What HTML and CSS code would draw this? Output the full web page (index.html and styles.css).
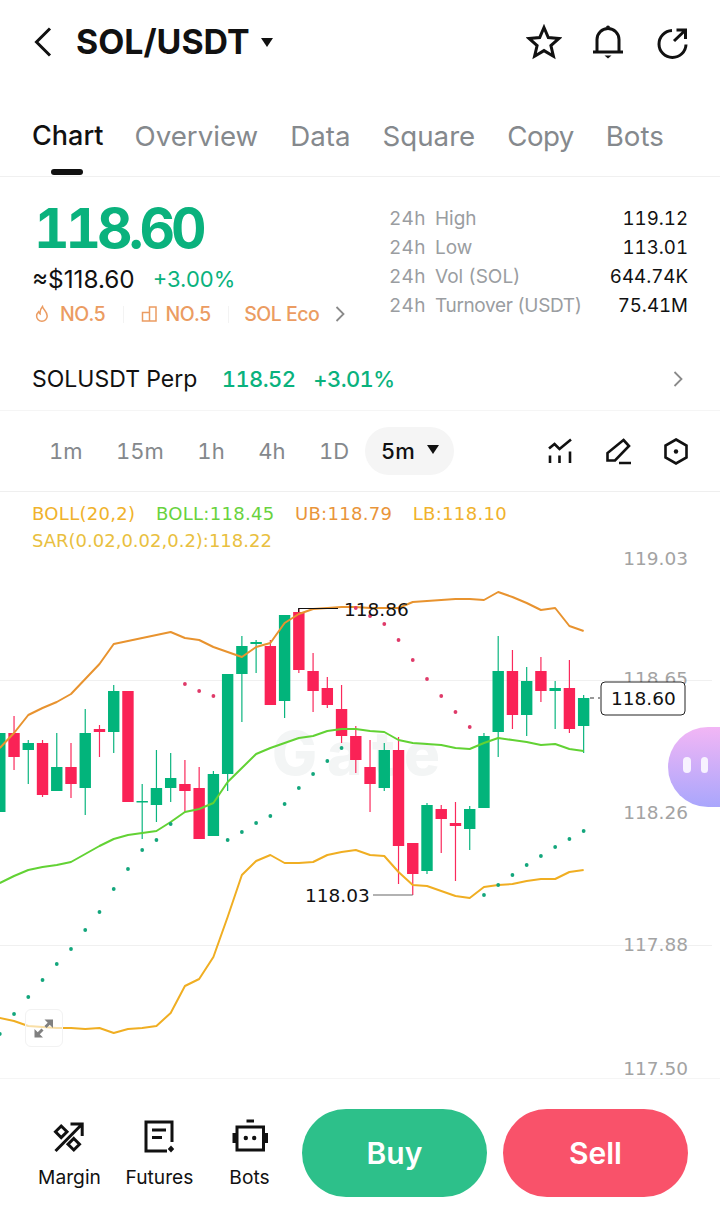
FILE: index.html
```html
<!DOCTYPE html>
<html lang="en">
<head>
<meta charset="utf-8">
<title>SOL/USDT</title>
<link rel="stylesheet" href="styles.css">
</head>
<body>
<div class="page">
  <header class="topbar">
    <div class="pair">
      <svg class="ic-back" viewBox="0 0 20 32"><path d="M17 2.500 3.500 16 17 29.500"/></svg>
      <h1 class="pair-name">SOL/USDT</h1>
      <span class="caret caret-lg"></span>
    </div>
    <div class="top-icons">
      <svg class="ic36" viewBox="0 0 36 36"><path d="M18 3.500l4.300 10 10.700 1-8.100 7.100 2.500 10.600L18 26.600l-9.400 5.600 2.500-10.600L3 14.500l10.700-1z"/></svg>
      <svg class="ic36" viewBox="0 0 36 36"><path d="M7 28V15.500a11 11 0 0 1 22 0V28M3 28h30"/><path class="solid" d="M16 3.500a2 2 0 0 1 4 0zM14.500 31.500h7l-3.500 3z"/></svg>
      <svg class="ic36" viewBox="0 0 36 36"><path d="M18 6.500a13.500 13.500 0 1 0 14 14M20 17 31 6.500M22.500 6H31.500V15"/></svg>
    </div>
  </header>

  <nav class="tabs">
    <a class="tab tab-active">Chart</a>
    <a class="tab">Overview</a>
    <a class="tab">Data</a>
    <a class="tab">Square</a>
    <a class="tab tab-tight">Copy</a>
    <a class="tab">Bots</a>
  </nav>

  <section class="ticker">
    <div class="ticker-main">
      <div class="price">118.60</div>
      <div class="price-sub"><span class="fiat">≈$118.60</span><span class="up">+3.00%</span></div>
      <div class="tags">
        <svg class="ic-tag" viewBox="0 0 16 18"><path d="M8.500 1.500c.5 3 4.700 5 4.700 9.500a5.300 5.300 0 0 1-10.600 0c0-2 1-3.300 2-4.300.3 1.200.8 1.800 1.500 2.200C5.800 6 6.800 3.500 8.500 1.500z"/></svg>
        <span class="tag-text tag-a">NO.5</span>
        <i class="tag-sep"></i>
        <svg class="ic-tag ic-build" viewBox="0 0 16 16"><path d="M8.500 1h6.500v14H8.500zM8.500 6.500H1.500V15h7"/></svg>
        <span class="tag-text tag-b">NO.5</span>
        <i class="tag-sep"></i>
        <span class="tag-text tag-c">SOL Eco</span>
        <svg class="ic-chev" viewBox="0 0 10 16"><path d="M1.500 1 8.500 8l-7 7"/></svg>
      </div>
    </div>
    <dl class="stats">
      <div class="stat"><dt><span class="h24">24h</span>High</dt><dd>119.12</dd></div>
      <div class="stat"><dt><span class="h24">24h</span>Low</dt><dd>113.01</dd></div>
      <div class="stat"><dt><span class="h24">24h</span>Vol (SOL)</dt><dd>644.74K</dd></div>
      <div class="stat"><dt><span class="h24">24h</span><span class="tight">Turnover (USDT)</span></dt><dd>75.41M</dd></div>
    </dl>
  </section>

  <section class="perp">
    <span class="perp-name">SOLUSDT Perp</span>
    <span class="perp-price">118.52</span>
    <span class="perp-pct">+3.01%</span>
    <svg class="ic-chev perp-chev" viewBox="0 0 10 16"><path d="M1.500 1 8.500 8l-7 7"/></svg>
  </section>

  <section class="toolbar">
    <div class="periods">
      <span class="period">1m</span>
      <span class="period">15m</span>
      <span class="period">1h</span>
      <span class="period">4h</span>
      <span class="period">1D</span>
      <span class="period period-active">5m<span class="caret"></span></span>
    </div>
    <div class="tools">
      <svg class="ic28" viewBox="0 0 28 28"><path d="M3 11.500 8.500 7l5 5L25 2.500M4 18.500V26M13.500 18.500V26M24 14.500V26"/></svg>
      <svg class="ic28" viewBox="0 0 28 28"><path d="M19.500 3 25 9 11 23.500H3.500V16zM15 26h12" /></svg>
      <svg class="ic28" viewBox="0 0 28 28"><path d="M14 2.500 24.500 8.500v12L14 26.500 3.500 20.500v-12z"/><circle class="solid" cx="14" cy="14.500" r="2.200"/></svg>
    </div>
  </section>

  <section class="chart">
    <div class="legend">
      <div class="legend-row">
        <span class="c-yellow">BOLL(20,2)</span>
        <span class="c-green">BOLL:118.45</span>
        <span class="c-orange">UB:118.79</span>
        <span class="c-yellow">LB:118.10</span>
      </div>
      <div class="legend-row legend-plain"><span class="c-sar">SAR(0.02,0.02,0.2):118.22</span></div>
    </div>
    <svg id="plot" class="plot" viewBox="0 492 720 586">
      <path class="grid" d="M0 680.500H712M0 945.500H712"/>
      <text class="wm" x="272" y="775" textLength="168" lengthAdjust="spacing">Gate</text>
      <g id="series"></g>
      <text class="axis" x="688" y="565">119.03</text>
      <text class="axis" x="688" y="685">118.65</text>
      <text class="axis" x="688" y="819">118.26</text>
      <text class="axis" x="688" y="951">117.88</text>
      <text class="axis" x="688" y="1075">117.50</text>
      <path class="lead" d="M298.700 612V608.500H338"/>
      <text class="mark" x="344" y="615.500">118.86</text>
      <path class="lead lead-low" d="M373 895H412.700"/>
      <text class="mark" x="305" y="901.500">118.03</text>
      <path class="dash" d="M590 698H600"/>
      <rect class="tag-box" x="601" y="682" width="84" height="33" rx="4"/>
      <text class="mark" x="611" y="705">118.60</text>
    </svg>
    <button class="expand" type="button" aria-label="Expand">
      <svg viewBox="0 0 35 35"><path class="arrow-fill" d="M8.500 26.500V18l8.500 8.500zM27 8.500V17L18.500 8.500z"/><path class="arrow-stem" d="M11.500 23.500 16.500 18.500M24 11.500 19.500 16"/></svg>
    </button>
    <div class="float-btn"><i></i><i></i></div>
  </section>

  <footer class="actions">
    <a class="action">
      <svg class="ic36" viewBox="0 0 36 36"><path d="M9.200 8 15 13.700 9.200 19.500 3.500 13.700zM21.800 20.500 27.500 26.300 21.800 32 16 26.300zM3.500 33 30.200 6M18.500 6H30.200V18"/></svg>
      <span>Margin</span>
    </a>
    <a class="action">
      <svg class="ic36" viewBox="0 0 36 36"><path d="M30 24V4H4V33H25M10 12H24M10 19.500H20"/><path class="solid" d="M29 27.500 32.200 31 29 34.500 25.800 31z"/></svg>
      <span>Futures</span>
    </a>
    <a class="action">
      <svg class="ic36" viewBox="0 0 36 36"><path d="M5 9H31.500V32H5zM2 15V25M34.500 15V25M14.500 3H22"/><circle class="solid" cx="13.800" cy="20" r="2.200"/><circle class="solid" cx="22.200" cy="20" r="2.200"/></svg>
      <span>Bots</span>
    </a>
    <a class="trade trade-buy">Buy</a>
    <a class="trade trade-sell">Sell</a>
  </footer>
</div>
<script src="chart.js"></script>
</body>
</html>
```
FILE: styles.css
```css
* { box-sizing: border-box; }
html, body { margin: 0; padding: 0; background: #fff; }
body { font-family: Inter, "Liberation Sans", sans-serif; color: #111; font-variant-numeric: tabular-nums; }
.page { width: 720px; height: 1228px; overflow: hidden; position: relative; }
svg path { fill: none; stroke: currentColor; }
svg .solid { fill: currentColor; stroke: none; }

.topbar { height: 84px; display: flex; align-items: center; justify-content: space-between; padding: 0 30px 0 33px; color: #111; }
.pair { display: flex; align-items: center; }
.ic-back { width: 20px; height: 32px; margin-right: 23px; }
.ic-back path { stroke-width: 3; }
.pair-name { margin: 0; font-size: 33.900px; font-weight: 700; line-height: 40px; }
.caret { display: inline-block; width: 0; height: 0; border-left: 6.500px solid transparent; border-right: 6.500px solid transparent; border-top: 9px solid #111; }
.caret-lg { margin-left: 11px; }
.top-icons { display: flex; gap: 28px; }
.ic36 { width: 36px; height: 36px; display: block; flex: none; }
.ic36 path { stroke-width: 3; }

.tabs { height: 93px; display: flex; gap: 32px; padding: 32px 0 0 32px; border-bottom: 1px solid #f0f0f0; }
.tab { font-size: 27.700px; line-height: 40px; color: #85898d; font-weight: 400; }
.tab-tight { letter-spacing: -0.6px; }
.tab-active { font-size: 27px; color: #111; font-weight: 500; position: relative; margin-right: -1px; }
.tab-active::after { content: ""; position: absolute; left: 19px; bottom: 1px; width: 32px; height: 6px; border-radius: 3px; background: #111; }

.ticker { height: 175px; display: flex; justify-content: space-between; padding: 26px 32px 0 32px; }
.ticker-main { width: 330px; }
.price { font-size: 55px; line-height: 50px; font-weight: 700; color: #0ab27d; letter-spacing: -4px; margin-left: 2px; }
.price-sub { display: flex; align-items: center; margin-top: 11px; font-size: 24px; line-height: 30px; }
.fiat { color: #111; margin-right: 18px; font-size: 24.300px; font-variant-numeric: normal; }
.up { color: #0ab27d; font-size: 22px; font-variant-numeric: normal; }
.tags { display: flex; align-items: center; margin-top: 6px; height: 28px; color: #eb9c62; }
.ic-tag { width: 16px; height: 18px; margin-left: 2px; }
.ic-tag path { stroke-width: 1.500; }
.ic-build { width: 16px; height: 16px; margin-left: 17px; }
.tag-text { font-size: 19.500px; font-weight: 500; letter-spacing: -0.5px; }
.tag-a { margin-left: 10px; }
.tag-b { margin-left: 9px; }
.tag-c { margin-left: 15px; }
.tag-sep { width: 1px; height: 17px; background: #f3f3f3; margin-left: 17px; }
.ic-chev { width: 10px; height: 16px; color: #8a8a8a; margin-left: 16px; }
.ic-chev path { stroke-width: 1.800; }

.stats { margin: 1px 0 0; width: 299px; }
.stat { display: flex; justify-content: space-between; height: 29px; line-height: 29px; font-size: 19px; }
.stat dt { color: #9a9da1; }
.h24 { display: inline-block; width: 46px; letter-spacing: 0.3px; }
.tight { letter-spacing: -0.35px; }
.stat dd { margin: 0; color: #111; font-size: 18.700px; }

.perp { height: 59px; display: flex; align-items: center; padding: 0 37px 4px 32px; border-bottom: 1px solid #f5f5f5; font-size: 23px; }
.perp-name { color: #111; margin-right: 24.500px; }
.perp-price { color: #0ab27d; font-weight: 500; margin-right: 18px; font-size: 22px; letter-spacing: -0.6px; }
.perp-pct { color: #0ab27d; font-weight: 500; font-size: 22px; letter-spacing: -0.6px; }
.perp-chev { margin-left: auto; }

.toolbar { height: 81px; display: flex; align-items: center; justify-content: space-between; padding: 0 30px 0 33px; border-bottom: 1px solid #efefef; }
.periods { display: flex; align-items: center; font-size: 22px; color: #84888c; }
.period { padding: 0 16px; margin-right: 1.500px; line-height: 48px; }
.period-active { color: #111; font-weight: 500; background: #f5f5f5; border-radius: 24px; display: flex; align-items: center; padding: 0 15px 0 16px; margin-left: -1.500px; margin-right: 0; }
.period-active .caret { margin-left: 12px; margin-top: -3px; }
.tools { display: flex; gap: 30px; color: #111; }
.ic28 { width: 28px; height: 28px; display: block; }
.ic28 path { stroke-width: 2.600; }

.chart { height: 587px; position: relative; border-bottom: 1px solid #f5f5f5; }
.legend { position: absolute; left: 32px; top: 8px; font-family: "DejaVu Sans", sans-serif; font-size: 18px; line-height: 27px; letter-spacing: 0.3px; z-index: 1; }
.legend-row { display: flex; gap: 20.500px; white-space: nowrap; }
.legend-plain { letter-spacing: 0; }
.c-yellow { color: #f0b22c; }
.c-green { color: #68d23e; }
.c-orange { color: #e9953a; }
.c-sar { color: #e9bf40; }
.plot { position: absolute; left: 0; top: 0; width: 720px; height: 586px; display: block; }
.plot text { font-family: "DejaVu Sans", sans-serif; font-size: 18.500px; }
.plot .axis { fill: #a3a3a3; text-anchor: end; }
.plot .mark { fill: #111; }
.plot .wm { font-family: Inter, sans-serif; font-size: 60px; font-weight: 800; fill: #f3f5f5; }
.plot .grid { stroke: #f0f0f0; stroke-width: 1; }
.plot .lead { stroke: #111; stroke-width: 1.200; }
.plot .lead-low { stroke: #666; }
.plot .dash { stroke: #333; stroke-width: 1; stroke-dasharray: 4 4; }
.plot .tag-box { fill: #fff; stroke: #222; stroke-width: 1; }
.plot .wick-up { stroke: #0bb57f; stroke-width: 1.200; }
.plot .wick-down { stroke: #fa2a5c; stroke-width: 1.200; }
.plot .body-up { fill: #02b47b; }
.plot .body-down { fill: #fa2256; }
.plot .dot-up { fill: #13a67c; }
.plot .dot-down { fill: #df3a69; }
.plot .line { stroke-width: 2; stroke-linejoin: round; }
.plot .line-ub { stroke: #e8932f; }
.plot .line-mid { stroke: #62d234; }
.plot .line-lb { stroke: #f0ae22; }

.expand { position: absolute; left: 25px; top: 517px; width: 38px; height: 38px; padding: 0; border: 1.500px solid #f2f2f2; border-radius: 6px; background: rgba(255, 255, 255, 0.6); }
.expand svg { display: block; width: 35px; height: 35px; }
.expand .arrow-fill { fill: #808080; stroke: none; }
.expand .arrow-stem { stroke: #808080; stroke-width: 3; }
.float-btn { position: absolute; right: 0; top: 235px; width: 52px; height: 80px; border-radius: 40px 0 0 40px; background: linear-gradient(180deg, #f2b6f5 0%, #a9a6fc 100%); display: flex; gap: 10px; padding: 30px 0 0 15px; }
.float-btn i { width: 7.500px; height: 16px; border-radius: 4px; background: #f7f2ff; }

.actions { height: 148px; display: flex; align-items: flex-start; padding: 30px 32px 0 24.500px; }
.action { width: 90px; flex: none; display: flex; flex-direction: column; align-items: center; margin-top: 9px; font-size: 19.200px; color: #111; }
.action span { margin-top: 11px; line-height: 24px; white-space: nowrap; }
.action:nth-of-type(3) { margin-right: 7.500px; }
.trade { width: 185px; flex: none; height: 88px; border-radius: 44px; display: flex; align-items: center; justify-content: center; color: #fff; font-size: 30px; font-weight: 600; }
.trade-buy { background: #2dc08a; }
.trade-sell { background: #f9526a; margin-left: 16px; }
```
FILE: chart.js
```js
// x step of one 5m candle, and the candles as [wick top, body top, body bottom, wick bottom, up?]
var STEP = 14.24;
var CANDLES = [
  [733, 733, 812, 812, 1], [716, 733, 757, 770, 0], [740, 743, 750, 784, 1], [740, 743, 795, 797, 0],
  [733, 767, 791, 791, 1], [743, 767, 784, 798, 0], [709, 733, 788, 815, 1], [725, 729, 732, 757, 0],
  [685, 691, 732, 753, 1], [691, 691, 802, 802, 0], [784, 801, 802.5, 839, 1], [750, 788, 805, 822, 1],
  [753, 778, 788, 802, 1], [760, 784, 791, 812, 0], [767, 788, 839, 839, 0], [771, 774, 836, 836, 1],
  [674, 674, 774, 791, 1], [636, 646, 674, 722, 1], [640, 642, 644, 673, 1], [640, 646, 705, 705, 0],
  [615, 615, 701, 718, 1], [609, 612, 670, 673, 0], [653, 671, 691, 712, 0], [677, 688, 705, 708, 0],
  [685, 709, 736, 743, 0], [726, 736, 760, 773, 0], [740, 767, 784, 812, 0], [743, 750, 788, 791, 1],
  [737, 750, 846, 884, 0], [843, 843, 874, 895, 0], [803, 805, 871, 874, 1], [805, 809, 819, 853, 0],
  [802, 823, 826, 881, 0], [806, 809, 829, 850, 1], [733, 736, 808, 808, 1], [636, 671, 732, 757, 1],
  [650, 671, 715, 729, 0], [667, 681, 715, 736, 1], [657, 671, 691, 702, 0], [681, 688, 691, 729, 1],
  [660, 688, 729, 733, 0], [695, 698, 726, 753, 1]
];
var UB = [748, 733, 715, 708, 702, 694, 679, 664, 644, 641, 638, 635, 632, 638, 640, 647, 652, 657, 647, 643, 623, 614, 609, 608, 607, 607, 608, 608, 608, 602, 601, 600, 599, 599, 600, 592, 597, 603, 610, 608, 626, 631];
var MID = [883, 876, 870, 867, 865, 862, 854, 846, 839, 835, 833, 831, 822, 812, 809, 803, 782, 768, 754, 748, 743, 738, 736, 731, 729, 729, 731, 732, 740, 743, 744, 745, 748, 749, 743, 738, 740, 742, 745, 744, 749, 751];
var LB = [1018, 1021, 1026, 1027, 1028, 1028, 1029, 1028, 1033, 1029, 1028, 1026, 1013, 986, 979, 957, 917, 875, 861, 855, 863, 863, 862, 855, 852, 850, 855, 856, 872, 885, 886, 891, 896, 898, 887, 885, 884, 881, 879, 879, 872, 870];
// SAR dots by candle index
var SAR_UP = [[0, 1034], [1, 1014], [2, 997], [3, 980], [4, 964], [5, 949], [6, 930], [7, 912], [8, 889], [9, 869], [10, 850], [11, 840], [12, 824],
  [16, 840], [17, 832], [18, 823], [19, 816], [20, 804], [21, 788], [22, 774], [23, 761], [24, 748],
  [34, 895], [35, 885], [36, 875], [37, 865], [38, 856], [39, 847], [40, 839], [41, 831]];
var SAR_DOWN = [[13, 684], [14, 691], [15, 696], [25, 608], [26, 616], [27, 624], [28, 640], [29, 660], [30, 679], [31, 696], [32, 712], [33, 727]];

var NS = "http://www.w3.org/2000/svg";
var root = document.getElementById("series");
function el(name, attrs) {
  var node = document.createElementNS(NS, name);
  for (var key in attrs) node.setAttribute(key, attrs[key]);
  root.appendChild(node);
}
function xAt(i) { return -0.2 + STEP * i; }

CANDLES.forEach(function (c, i) {
  var x = xAt(i), kind = c[4] ? "up" : "down";
  el("path", { "class": "wick-" + kind, d: "M" + x + " " + c[0] + "V" + c[3] });
  el("rect", { "class": "body-" + kind, x: x - 5.7, y: c[1], width: 11.4, height: c[2] - c[1] });
});
[[UB, "line-ub"], [MID, "line-mid"], [LB, "line-lb"]].forEach(function (s) {
  var d = s[0].map(function (y, i) { return (i ? "L" : "M") + xAt(i) + " " + y; }).join("");
  el("path", { "class": "line " + s[1], d: d });
});
SAR_UP.forEach(function (p) { el("circle", { "class": "dot-up", cx: xAt(p[0]), cy: p[1], r: 1.9 }); });
SAR_DOWN.forEach(function (p) { el("circle", { "class": "dot-down", cx: xAt(p[0]), cy: p[1], r: 1.9 }); });
```
